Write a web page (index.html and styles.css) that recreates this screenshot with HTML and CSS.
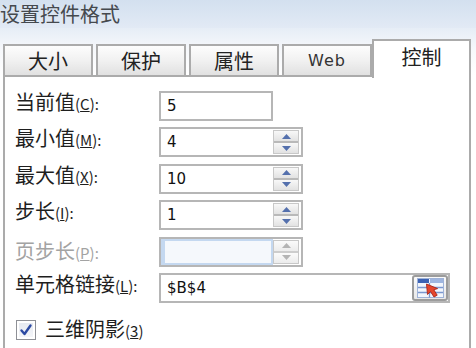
FILE: index.html
```html
<!DOCTYPE html>
<html lang="zh-CN">
<head>
<meta charset="utf-8">
<title>设置控件格式</title>
<link rel="stylesheet" href="styles.css">
</head>
<body>
<div class="titlebar"><span class="title">设置控件格式</span></div>
<div class="tabstrip">
  <div class="tab">大小</div>
  <div class="tab">保护</div>
  <div class="tab">属性</div>
  <div class="tab tab-latin">Web</div>
  <div class="tab active">控制</div>
</div>
<div class="panel">
  <div class="form">
    <div class="lbl">当前值<span class="mn">(<u>C</u>):</span></div>
    <div class="field w-short"><span class="val">5</span></div>

    <div class="lbl">最小值<span class="mn">(<u>M</u>):</span></div>
    <div class="field w-spin"><span class="val">4</span>
      <div class="spin">
        <div class="spin-btn"><svg width="9" height="5" viewBox="0 0 9 5"><path d="M4.5 0L9 5H0Z" class="arr"/></svg></div>
        <div class="spin-btn"><svg width="9" height="5" viewBox="0 0 9 5"><path d="M0 0H9L4.5 5Z" class="arr"/></svg></div>
      </div>
    </div>

    <div class="lbl">最大值<span class="mn">(<u>X</u>):</span></div>
    <div class="field w-spin"><span class="val">10</span>
      <div class="spin">
        <div class="spin-btn"><svg width="9" height="5" viewBox="0 0 9 5"><path d="M4.5 0L9 5H0Z" class="arr"/></svg></div>
        <div class="spin-btn"><svg width="9" height="5" viewBox="0 0 9 5"><path d="M0 0H9L4.5 5Z" class="arr"/></svg></div>
      </div>
    </div>

    <div class="lbl">步长<span class="mn">(<u>I</u>):</span></div>
    <div class="field w-spin"><span class="val">1</span>
      <div class="spin">
        <div class="spin-btn"><svg width="9" height="5" viewBox="0 0 9 5"><path d="M4.5 0L9 5H0Z" class="arr"/></svg></div>
        <div class="spin-btn"><svg width="9" height="5" viewBox="0 0 9 5"><path d="M0 0H9L4.5 5Z" class="arr"/></svg></div>
      </div>
    </div>

    <div class="lbl lbl-off">页步长<span class="mn">(<u>P</u>):</span></div>
    <div class="field w-spin field-off"><span class="val"></span>
      <div class="spin">
        <div class="spin-btn"><svg width="9" height="5" viewBox="0 0 9 5"><path d="M4.5 0L9 5H0Z" class="arr"/></svg></div>
        <div class="spin-btn"><svg width="9" height="5" viewBox="0 0 9 5"><path d="M0 0H9L4.5 5Z" class="arr"/></svg></div>
      </div>
    </div>

    <div class="lbl">单元格链接<span class="mn">(<u>L</u>):</span></div>
    <div class="field w-link"><span class="val">$B$4</span>
      <div class="pick">
        <svg width="27" height="20" viewBox="0 0 27 20">
          <rect x="0.5" y="0.5" width="26" height="19" fill="#f2f6fc" stroke="#9fb3d8"/>
          <rect x="1" y="1" width="11" height="4" fill="#3c62b4"/>
          <rect x="13" y="1" width="13" height="4" fill="#9fb6e0"/>
          <path d="M1 9.5H26M1 14.5H26M12.5 5V19.5" stroke="#7b98cf" stroke-width="1.3" fill="none"/>
          <path d="M9.5 6L10.5 16.5L13.5 13.6L17 19L20.2 17.2L16.8 11.8L20.6 10.6Z" fill="#e5462c" stroke="#a8261a" stroke-width="0.9" stroke-linejoin="round"/>
        </svg>
      </div>
    </div>
  </div>

  <div class="check">
    <span class="box"><svg width="14" height="14" viewBox="0 0 14 14"><path d="M2.5 7.5L5.5 11L11.5 2.5" fill="none" stroke="#2c4aa3" stroke-width="2.4" stroke-linecap="round" stroke-linejoin="round"/></svg></span>
    <span class="check-lbl">三维阴影<span class="mn">(<u>3</u>)</span></span>
  </div>
</div>
</body>
</html>
```

FILE: styles.css
```css
html, body {
  margin: 0;
  padding: 0;
}
body {
  width: 476px;
  height: 348px;
  overflow: hidden;
  background: #ffffff;
  font-family: "Noto Sans CJK SC", "Noto Sans", sans-serif;
  color: #1e1e1e;
}

.titlebar {
  height: 28px;
  background: linear-gradient(#d3e0ef, #e2eaf5);
}
.title {
  display: block;
  font-size: 20px;
  line-height: 27px;
  color: #45494e;
  white-space: nowrap;
}

.tabstrip {
  position: relative;
  z-index: 1;
  height: 47px;
  display: flex;
  align-items: flex-end;
  gap: 3px;
  padding-left: 3px;
  background: linear-gradient(#e6edf6, #f6f8fb 45%, #ffffff);
}
.tab {
  box-sizing: border-box;
  width: 90px;
  height: 31px;
  border: 2px solid #ababab;
  border-bottom: none;
  background: linear-gradient(#fdfdfd, #f1f1f1 50%, #e1e1e1);
  display: flex;
  align-items: center;
  justify-content: center;
  font-size: 20px;
  line-height: 1;
  color: #222;
}
.tab-latin {
  font-family: "DejaVu Sans", sans-serif;
  font-size: 16px;
  letter-spacing: 1px;
  color: #333;
}
.tab.active {
  width: 99px;
  height: 39px;
  margin-left: -3px;
  margin-bottom: -3px;
  padding-bottom: 5px;
  background: #ffffff;
}

.panel {
  box-sizing: border-box;
  width: 468px;
  height: 273px;
  margin-left: 3px;
  border: 2px solid #ababab;
  border-bottom: none;
  padding: 14px 0 0 10px;
  background: #ffffff;
}

.form {
  display: grid;
  grid-template-columns: 144px auto;
  row-gap: 6.4px;
  justify-items: start;
  align-items: start;
}
.lbl {
  font-size: 20px;
  line-height: 24px;
  margin-top: -1px;
  white-space: nowrap;
  color: #1e1e1e;
}
.lbl-off {
  color: #a3a3a3;
  margin-top: 2px;
}
.mn {
  font-size: 15px;
}

.field {
  box-sizing: border-box;
  height: 30px;
  border: 2px solid #b6b6b6;
  display: flex;
  align-items: center;
  background: #ffffff;
}
.w-short { width: 114px; }
.w-spin { width: 144px; }
.w-link { width: 291px; }

.val {
  flex: 1;
  padding-left: 6px;
  font-family: "DejaVu Sans", sans-serif;
  font-size: 15px;
  color: #111;
}

.spin {
  box-sizing: border-box;
  width: 26px;
  height: 24px;
  margin-right: 2px;
  display: flex;
  flex-direction: column;
  border: 1px solid #c8c8c8;
}
.spin-btn {
  flex: 1;
  display: flex;
  align-items: center;
  justify-content: center;
  background: linear-gradient(#f8f8f8, #e2e2e2);
}
.spin-btn + .spin-btn {
  border-top: 2px solid #b9b9b9;
}
.spin-btn svg { display: block; }
.arr { fill: #5470ad; }

.field-off .val {
  align-self: stretch;
  box-sizing: border-box;
  border: 2px solid #c4d8f0;
  border-left-width: 4px;
  background: #f5f8fc;
}
.field-off .arr { fill: #b4b4b4; }
.field-off .spin-btn { background: linear-gradient(#fbfbfb, #ececec); }
.field-off .spin-btn + .spin-btn { border-top-color: #cdcdcd; }

.pick {
  box-sizing: border-box;
  width: 36px;
  height: 26px;
  border: 2px solid #9c9c9c;
  border-radius: 3px;
  background: linear-gradient(#fafafa, #e8e8e8);
  display: flex;
  align-items: center;
  justify-content: center;
}
.pick svg { display: block; }

.check {
  display: flex;
  align-items: center;
  gap: 9px;
  margin-top: 14px;
  margin-left: 1px;
}
.box {
  box-sizing: border-box;
  width: 20px;
  height: 20px;
  border: 1px solid #8e9096;
  background: linear-gradient(#e4e8f0, #f6f7fa);
  box-shadow: inset 0 0 0 2px #ffffff;
  display: flex;
  align-items: center;
  justify-content: center;
}
.box svg { display: block; }
.check-lbl {
  font-size: 20px;
  line-height: 24px;
  color: #1e1e1e;
}
```
